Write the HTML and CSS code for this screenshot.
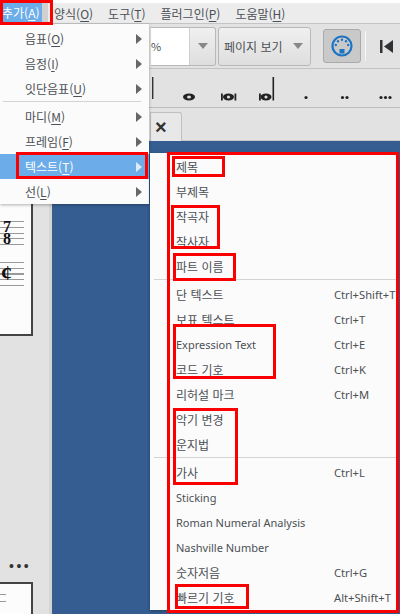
FILE: index.html
```html
<!DOCTYPE html>
<html lang="ko">
<head>
    <meta charset="UTF-8">
    <meta name="viewport" content="width=device-width, initial-scale=1.0">
    <title>MuseScore 추가 메뉴</title>
    <link rel="stylesheet" href="styles.css">
</head>
<body>
    <div class="window">
        <div class="menubar">
            <span class="menubar-item menubar-active">추가(<u>A</u>)</span>
            <span class="menubar-item">양식(<u>O</u>)</span>
            <span class="menubar-item">도구(<u>T</u>)</span>
            <span class="menubar-item">플러그인(<u>P</u>)</span>
            <span class="menubar-item">도움말(<u>H</u>)</span>
        </div>

        <div class="toolbar">
            <div class="combo combo-zoom">
                <span class="combo-text">%</span>
                <span class="combo-btn"><i class="arrow-down"></i></span>
            </div>
            <div class="combo combo-view">
                <span class="combo-text">페이지 보기</span>
                <span class="combo-btn"><i class="arrow-down"></i></span>
            </div>
            <div class="grip"></div>
            <div class="midi-btn">
                <svg width="24" height="24" viewBox="0 0 24 24">
                    <circle cx="12" cy="12" r="9.5" fill="none" stroke="#1c74c4" stroke-width="2.2"/>
                    <circle cx="5.8" cy="11" r="1.2" fill="#1c74c4"/>
                    <circle cx="8" cy="7.2" r="1.2" fill="#1c74c4"/>
                    <circle cx="12" cy="5.8" r="1.2" fill="#1c74c4"/>
                    <circle cx="16" cy="7.2" r="1.2" fill="#1c74c4"/>
                    <circle cx="18.2" cy="11" r="1.2" fill="#1c74c4"/>
                    <rect x="9.5" y="15" width="5" height="4.5" fill="#1c74c4"/>
                </svg>
            </div>
            <div class="tool-sep"></div>
            <svg class="prev-icon" width="13" height="13" viewBox="0 0 13 13">
                <rect x="0" y="0" width="2.500" height="13" fill="#2f3336"/>
                <path d="M13 0V13L4 6.5Z" fill="#2f3336"/>
            </svg>
        </div>

        <div class="notebar">
            <svg width="250" height="38" viewBox="150 69 250 38">
                <rect x="152" y="77" width="1.4" height="22" fill="#333"/>
                <ellipse cx="189" cy="97" rx="6" ry="3.4" fill="#222"/>
                <ellipse cx="189" cy="97" rx="2" ry="1.5" fill="#ddd"/>
                <ellipse cx="228.500" cy="97" rx="5.500" ry="3.4" fill="#222"/>
                <ellipse cx="228.500" cy="97" rx="1.6" ry="1.5" fill="#ddd"/>
                <rect x="221" y="93.500" width="1.8" height="7" fill="#222"/>
                <rect x="234.500" y="93.500" width="1.8" height="7" fill="#222"/>
                <ellipse cx="266" cy="97" rx="5.500" ry="3.4" fill="#222"/>
                <ellipse cx="266" cy="97" rx="1.6" ry="1.5" fill="#ddd"/>
                <rect x="259" y="93.500" width="1.8" height="7" fill="#222"/>
                <rect x="272.500" y="77" width="1.6" height="23.500" fill="#222"/>
                <circle cx="306" cy="97.500" r="1.6" fill="#222"/>
                <circle cx="342.500" cy="97.500" r="1.6" fill="#222"/>
                <circle cx="347" cy="97.500" r="1.6" fill="#222"/>
                <circle cx="381" cy="97.500" r="1.6" fill="#222"/>
                <circle cx="385.500" cy="97.500" r="1.6" fill="#222"/>
                <circle cx="390" cy="97.500" r="1.6" fill="#222"/>
            </svg>
        </div>

        <div class="tabbar">
            <div class="tab">×</div>
        </div>

        <div class="workspace">
            <div class="side">
                <div class="page page-top">
                    <div class="staff staff-one">
                        <span class="time-sig">7<br>8</span>
                    </div>
                    <div class="staff staff-two">
                        <span class="cut-time">¢</span>
                    </div>
                </div>
                <div class="more">•••</div>
                <div class="page page-bottom">
                    <div class="page-ticks"></div>
                </div>
            </div>
            <div class="splitter"></div>
            <div class="canvas"></div>
        </div>
    </div>

    <div class="menu menu-add">
        <div class="menu-row"><span>음표(<u>O</u>)</span><i class="arrow-right"></i></div>
        <div class="menu-row"><span>음정(<u>I</u>)</span><i class="arrow-right"></i></div>
        <div class="menu-row"><span>잇단음표(<u>U</u>)</span><i class="arrow-right"></i></div>
        <div class="menu-sep"></div>
        <div class="menu-row"><span>마디(<u>M</u>)</span><i class="arrow-right"></i></div>
        <div class="menu-row"><span>프레임(<u>F</u>)</span><i class="arrow-right"></i></div>
        <div class="menu-row menu-row-active"><span>텍스트(<u>T</u>)</span><i class="arrow-right"></i></div>
        <div class="menu-row"><span>선(<u>L</u>)</span><i class="arrow-right"></i></div>
    </div>

    <div class="menu menu-text">
        <div class="menu-row"><span>제목</span></div>
        <div class="menu-row"><span>부제목</span></div>
        <div class="menu-row"><span>작곡자</span></div>
        <div class="menu-row"><span>작사자</span></div>
        <div class="menu-row"><span>파트 이름</span></div>
        <div class="menu-sep"></div>
        <div class="menu-row"><span>단 텍스트</span><kbd>Ctrl+Shift+T</kbd></div>
        <div class="menu-row"><span>보표 텍스트</span><kbd>Ctrl+T</kbd></div>
        <div class="menu-row"><span class="latin">Expression Text</span><kbd>Ctrl+E</kbd></div>
        <div class="menu-row"><span>코드 기호</span><kbd>Ctrl+K</kbd></div>
        <div class="menu-row"><span>리허설 마크</span><kbd>Ctrl+M</kbd></div>
        <div class="menu-row"><span>악기 변경</span></div>
        <div class="menu-row"><span>운지법</span></div>
        <div class="menu-sep"></div>
        <div class="menu-row"><span>가사</span><kbd>Ctrl+L</kbd></div>
        <div class="menu-row"><span class="latin">Sticking</span></div>
        <div class="menu-row"><span class="latin">Roman Numeral Analysis</span></div>
        <div class="menu-row"><span class="latin">Nashville Number</span></div>
        <div class="menu-row"><span>숫자저음</span><kbd>Ctrl+G</kbd></div>
        <div class="menu-row"><span>빠르기 기호</span><kbd>Alt+Shift+T</kbd></div>
    </div>

    <!-- red boxes drawn over the screenshot -->
    <div class="mark mark-add"></div>
    <div class="mark mark-text-item"></div>
    <div class="mark mark-list"></div>
    <div class="mark mark-title"></div>
    <div class="mark mark-composer"></div>
    <div class="mark mark-part"></div>
    <div class="mark mark-expr"></div>
    <div class="mark mark-instr"></div>
    <div class="mark mark-tempo"></div>
</body>
</html>
```

FILE: styles.css
```css
:root {
    --bar-bg: #e2e2e2;
    --line: #c4c4c4;
    --text-color: #4b5055;
    --menu-bg: #fbfbfb;
    --blue: #355d91;
    --select: #6cace8;
    --red: #fa0000;
}
* {
    box-sizing: border-box;
}
html, body {
    margin: 0;
    height: 100%;
    overflow: hidden;
}
body {
    position: relative;
    width: 400px;
    height: 614px;
    background: #fff;
    font-family: "Noto Sans CJK KR", "Noto Sans", sans-serif;
    font-size: 12px;
    color: var(--text-color);
}
u {
    text-underline-offset: 2px;
}
.window {
    display: flex;
    flex-direction: column;
    height: 614px;
    padding-top: 3px;
}

/* menu bar */
.menubar {
    display: flex;
    align-items: center;
    height: 20px;
    padding-left: 2px;
    background: #ececec;
    gap: 15px;
    white-space: nowrap;
    flex-shrink: 0;
}
.menubar-active {
    width: 48px;
    height: 20px;
    margin-left: -2px;
    margin-right: -9px;
    padding-left: 2px;
    line-height: 20px;
    background: linear-gradient(to right, var(--select) 42px, #d0d0d0 42px);
    color: #fff;
}

/* tool bars */
.toolbar {
    display: flex;
    align-items: center;
    height: 46px;
    padding-left: 152px;
    background: var(--bar-bg);
    border-top: 1px solid var(--line);
    border-bottom: 1px solid var(--line);
    flex-shrink: 0;
}
.combo {
    display: flex;
    height: 39px;
    background: linear-gradient(#f0f0f0, #dedede);
    border: 1px solid #b8b8b8;
    border-radius: 3px;
}
.combo-zoom {
    width: 65px;
    margin-left: -1px;
    border-left: none;
    border-radius: 0 3px 3px 0;
}
.combo-view {
    width: 93px;
    margin-left: 2px;
}
.combo-text {
    flex: 1;
    padding-left: 5px;
    line-height: 37px;
    white-space: nowrap;
}
.combo-zoom .combo-text {
    background: #fff;
    border-right: 1px solid #cfcfcf;
    padding-left: 0;
    font-size: 11px;
}
.combo-btn {
    display: flex;
    align-items: center;
    justify-content: center;
    width: 25px;
}
.arrow-down {
    width: 0;
    height: 0;
    border-left: 5px solid transparent;
    border-right: 5px solid transparent;
    border-top: 6px solid #888;
}
.grip {
    width: 5px;
    height: 22px;
    margin: 0 4px 0 3px;
    background-image: radial-gradient(#aaa 40%, transparent 45%);
    background-size: 2px 2px;
}
.midi-btn {
    display: flex;
    align-items: center;
    justify-content: center;
    width: 38px;
    height: 34px;
    background: #c9c9c9;
    border: 1px solid #aaa;
    border-radius: 3px;
}
.tool-sep {
    width: 1px;
    height: 30px;
    margin: 0 14px 0 4px;
    background: #f6f6f6;
}
.prev-icon {
    flex-shrink: 0;
}
.notebar {
    height: 39px;
    background: var(--bar-bg);
    border-bottom: 1px solid #bcbcbc;
    flex-shrink: 0;
    display: flex;
    justify-content: flex-end;
}
.tabbar {
    height: 33px;
    padding: 4px 0 0 150px;
    background: var(--bar-bg);
    border-bottom: 1px solid #c8c8c8;
    flex-shrink: 0;
}
.tab {
    width: 32px;
    height: 29px;
    padding-left: 4px;
    background: #e8e8e8;
    border: 1px solid #c0c0c0;
    border-bottom: none;
    border-radius: 0 3px 0 0;
    font-family: "Liberation Sans", sans-serif;
    font-size: 20px;
    font-weight: bold;
    line-height: 29px;
    color: #333;
}

/* work area */
.workspace {
    display: flex;
    flex: 1;
    min-height: 0;
}
.side {
    display: flex;
    flex-direction: column;
    width: 49px;
    background: var(--bar-bg);
}
.splitter {
    width: 3px;
    background: #d4d4d4;
}
.canvas {
    flex: 1;
    background: var(--blue);
}
.page {
    width: 33px;
    background: #fcfcfc;
    border-right: 2px solid #444;
}
.page-top {
    height: 195px;
    border-bottom: 2px solid #444;
    padding-top: 80px;
}
.staff {
    position: relative;
    width: 24px;
    height: 24px;
    background-image: repeating-linear-gradient(#999 0, #999 1px, transparent 1px, transparent 5.75px);
}
.staff-two {
    margin-top: 17px;
}
.time-sig {
    position: absolute;
    top: 0;
    left: 3px;
    font-family: "Liberation Serif", serif;
    font-size: 16px;
    font-weight: bold;
    line-height: 12px;
    color: #111;
}
.cut-time {
    position: absolute;
    top: -1px;
    left: 1px;
    font-family: "Liberation Serif", serif;
    font-size: 22px;
    font-weight: bold;
    line-height: 24px;
    color: #111;
}
.more {
    height: 26px;
    margin-top: 220px;
    padding-left: 9px;
    font-family: "Liberation Sans", sans-serif;
    line-height: 20px;
    font-size: 14px;
    letter-spacing: 2.5px;
    color: #333;
}
.page-bottom {
    flex: 1;
    border-top: 2px solid #444;
    padding-top: 10px;
}
.page-ticks {
    width: 6px;
    height: 8px;
    border-top: 1px solid #999;
    border-bottom: 1px solid #999;
}

/* pulled down menus */
.menu {
    position: absolute;
    background: var(--menu-bg);
    box-shadow: 0 1px 3px rgba(0, 0, 0, 0.3);
}
.menu-add {
    top: 24px;
    left: 0;
    width: 149px;
    padding-top: 2px;
}
.menu-text {
    top: 153px;
    left: 150px;
    width: 248px;
    padding-top: 1px;
}
.menu-row {
    display: flex;
    align-items: center;
    justify-content: space-between;
    height: 25px;
    padding-left: 25px;
    padding-right: 7px;
    white-space: nowrap;
}
.menu-text .menu-row {
    padding-left: 26px;
    padding-right: 3px;
}
.menu-text kbd {
    width: 61px;
    font-family: "Noto Sans", sans-serif;
    font-size: 11.2px;
    white-space: nowrap;
}
.latin {
    font-family: "Noto Sans", sans-serif;
    font-size: 11px;
}
.menu-row-active {
    background: var(--select);
    color: #fff;
}
.menu-sep {
    height: 3px;
    margin: 0 8px 0 3px;
    border-top: 1px solid #d4d4d4;
}
.menu-text .menu-sep {
    margin: 0 0 0 4px;
}
.arrow-right {
    width: 0;
    height: 0;
    border-top: 5px solid transparent;
    border-bottom: 5px solid transparent;
    border-left: 6px solid #666;
}
.menu-row-active .arrow-right {
    border-left-color: #dcecfa;
}

/* red annotation boxes */
.mark {
    position: absolute;
    border: 3px solid var(--red);
    pointer-events: none;
}
.mark-add { left: 0; top: 0; width: 53px; height: 25px; }
.mark-text-item { left: 16px; top: 152px; width: 132px; height: 27px; }
.mark-list { left: 167px; top: 152px; width: 232px; height: 461px; }
.mark-title { left: 172px; top: 156px; width: 53px; height: 21px; }
.mark-composer { left: 171px; top: 205px; width: 49px; height: 44px; }
.mark-part { left: 173px; top: 253px; width: 63px; height: 28px; }
.mark-expr { left: 173px; top: 324px; width: 103px; height: 55px; }
.mark-instr { left: 173px; top: 408px; width: 65px; height: 77px; }
.mark-tempo { left: 175px; top: 584px; width: 74px; height: 25px; }
```
